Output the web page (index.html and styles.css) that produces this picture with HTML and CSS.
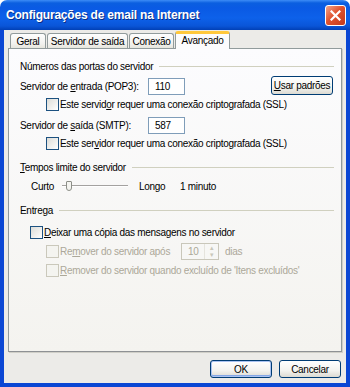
FILE: index.html
```html
<!DOCTYPE html>
<html lang="pt">
<head>
  <meta charset="UTF-8">
  <title>Configurações de email na Internet</title>
  <link rel="stylesheet" href="styles.css">
</head>
<body>
  <div class="window">
    <div class="titlebar">
      <span class="title">Configurações de email na Internet</span>
      <span class="close">
        <svg width="11" height="11" viewBox="0 0 11 11"><path d="M1.5 1.5 L9.5 9.5 M9.5 1.5 L1.5 9.5" stroke="#fff" stroke-width="2.2" stroke-linecap="square"/></svg>
      </span>
    </div>
    <div class="body">
      <div class="tabs">
        <span class="tab t1">Geral</span>
        <span class="tab t2">Servidor de saída</span>
        <span class="tab t3">Conexão</span>
        <span class="tab active">Avançado</span>
      </div>
      <div class="panel">
        <div class="group-head h1"><span>Números das portas do servidor</span><i></i></div>

        <div class="row port-row">
          <span class="lbl">Servidor de <u>e</u>ntrada (POP3):</span>
          <span class="field">110</span>
          <span class="btn defaults"><u>U</u>sar padrões</span>
        </div>
        <div class="row cb-row indent">
          <span class="cb"></span><span>Este servid<u>o</u>r requer uma conexão criptografada (SSL)</span>
        </div>

        <div class="row port-row p2">
          <span class="lbl">Servidor de <u>s</u>aída (SMTP):</span>
          <span class="field">587</span>
        </div>
        <div class="row cb-row indent">
          <span class="cb"></span><span>Este ser<u>v</u>idor requer uma conexão criptografada (SSL)</span>
        </div>

        <div class="group-head h2"><span><u>T</u>empos limite do servidor</span><i></i></div>
        <div class="row slider-row">
          <span class="curto">Curto</span>
          <span class="slider"><span class="track"></span><span class="thumb"></span></span>
          <span class="longo">Longo</span>
          <span>1 minuto</span>
        </div>

        <div class="group-head h3"><span>Entrega</span><i></i></div>
        <div class="row cb-row keep">
          <span class="cb"></span><span><u>D</u>eixar uma cópia das mensagens no servidor</span>
        </div>
        <div class="row cb-row indent disabled r1">
          <span class="cb"></span><span class="rm">Re<u>m</u>over do servidor após</span>
          <span class="spin"><span class="val">10</span><span class="arrows"><span>&#9652;</span><span>&#9662;</span></span></span>
          <span class="dias">dias</span>
        </div>
        <div class="row cb-row indent disabled r2">
          <span class="cb"></span><span><u>R</u>emover do servidor quando excluído de 'Itens excluídos'</span>
        </div>
      </div>
      <div class="buttons">
        <span class="btn ok">OK</span>
        <span class="btn">Cancelar</span>
      </div>
    </div>
  </div>
</body>
</html>
```
FILE: styles.css
```css
body { margin: 0; background: #fff; font-family: "Liberation Sans", Arial, sans-serif; font-size: 10px; letter-spacing: -0.3px; color: #000; }
u { text-decoration: underline; text-underline-offset: 1px; }

.window { width: 350px; height: 387px; display: flex; flex-direction: column; }
.titlebar { height: 30px; box-sizing: border-box; border-radius: 7px 7px 0 0; display: flex; align-items: center; justify-content: space-between; padding: 0 4px 1px 6px;
  background: linear-gradient(#3d8cf6 0px, #0b5fe0 3px, #0a5ae4 8px, #0d61ea 18px, #0a55d8 26px, #0140b6 30px); }
.title { color: #fff; font-family: "Liberation Sans Narrow", "Liberation Sans", sans-serif; font-weight: bold; font-size: 12px; letter-spacing: -0.2px; text-shadow: 1px 1px 0 #0a2d86; }
.close { width: 19px; height: 19px; border: 1px solid #fff; border-radius: 3px; display: flex; align-items: center; justify-content: center;
  background: linear-gradient(135deg, #f0a58c, #e0532f 45%, #c2391b); margin-top: 1px; }

.body { flex: 1; background: #ecebe8; border: 4px solid #0b47d4; border-top: 0; display: flex; flex-direction: column; padding: 0 4px 0 4px; }
.tabs { height: 18px; display: flex; align-items: flex-end; padding-left: 2px; position: relative; z-index: 1; }
.tab { height: 15px; box-sizing: border-box; border: 1px solid #919b9c; border-bottom: 0; border-radius: 3px 3px 0 0; padding: 1px 0 0 0; margin-right: 1px; text-align: center;
  background: linear-gradient(#fefefe, #f1f1ee 70%, #e6e5dd); white-space: nowrap; line-height: 13px; }
.t1 { width: 36px; } .t2 { width: 81px; } .t3 { width: 45px; }
.tab.active { height: 18px; width: 55px; margin-bottom: -1px; background: #fcfcfd; border-top: 3px solid #ffc83c; border-color: #ffc83c #919b9c #919b9c #919b9c; padding-top: 0; line-height: 14px; border-radius: 3px 3px 0 0; }

.panel { height: 304px; box-sizing: border-box; border: 1px solid #919b9c; background: linear-gradient(#fcfcfe, #f4f3ef); padding: 10px 7px 0 11px; border-bottom-color: #8e9194; box-shadow: 1px 1px 0 #d0cfc8; }

.group-head { height: 14px; display: flex; align-items: center; }
.group-head i { flex: 1; height: 1px; background: #d0d0bf; margin-left: 6px; margin-top: 1px; }
.h2 { margin-top: 9px; }
.h3 { margin-top: 7px; }

.row { display: flex; align-items: center; white-space: nowrap; }
.port-row { height: 19px; margin-top: 4px; }
.p2 { margin-top: 4px; }
.lbl { width: 128px; }
.field { width: 37px; height: 17px; box-sizing: border-box; border: 1px solid #7f9db9; background: #fff; padding: 1px 0 0 6px; line-height: 14px; }
.btn { height: 19px; box-sizing: border-box; border: 1px solid #003c74; border-radius: 3px; display: flex; align-items: center; justify-content: center;
  background: linear-gradient(#ffffff, #f3f3ef 60%, #dcdad2); }
.defaults { width: 62px; margin-left: auto; margin-right: 1px; margin-top: -3px; }

.cb-row { height: 16px; }
.indent { padding-left: 26px; }
.cb { width: 13px; height: 13px; box-sizing: border-box; border: 1px solid #1c5180; background: linear-gradient(135deg, #dcdcd7, #fff); margin-right: 1px; flex: none; }
.keep { margin-top: 7px; padding-left: 10px; }

.slider-row { height: 20px; margin-top: 2px; padding-left: 11px; }
.curto { width: 31px; }
.slider { width: 66px; height: 20px; position: relative; }
.track { position: absolute; left: 0; right: 0; top: 9px; height: 2px; border-top: 1px solid #a4a2a0; border-bottom: 1px solid #fff; box-sizing: border-box; }
.thumb { position: absolute; left: 4px; top: 5px; width: 6px; height: 10px; box-sizing: border-box; border: 1px solid #8c8e87; border-radius: 1px 1px 3px 3px; background: #f4f4f0; }
.longo { margin-left: 11px; width: 41px; }

.disabled { color: #aca899; }
.disabled .cb { border-color: #cac8bb; background: #f4f4f0; }
.r1 { height: 18px; margin-top: 2px; }
.r2 { margin-top: 2px; }
.rm { width: 121px; }
.spin { width: 38px; height: 17px; box-sizing: border-box; border: 1px solid #c9c7ba; background: #f7f7f5; display: flex; }
.spin .val { flex: 1; padding: 1px 0 0 6px; line-height: 14px; }
.arrows { width: 13px; display: flex; flex-direction: column; border-left: 1px solid #e5e4dd; font-size: 7px; line-height: 7px; text-align: center; color: #c9c7ba; }
.dias { margin-left: 6px; }

.buttons { display: flex; justify-content: flex-end; gap: 7px; padding: 8px 1px 0 0; }
.buttons .btn { width: 62px; height: 18px; }
.ok { box-shadow: inset 0 0 0 1px #aac3f1, inset 0 -1px 0 1px #84a7e6; }
```
